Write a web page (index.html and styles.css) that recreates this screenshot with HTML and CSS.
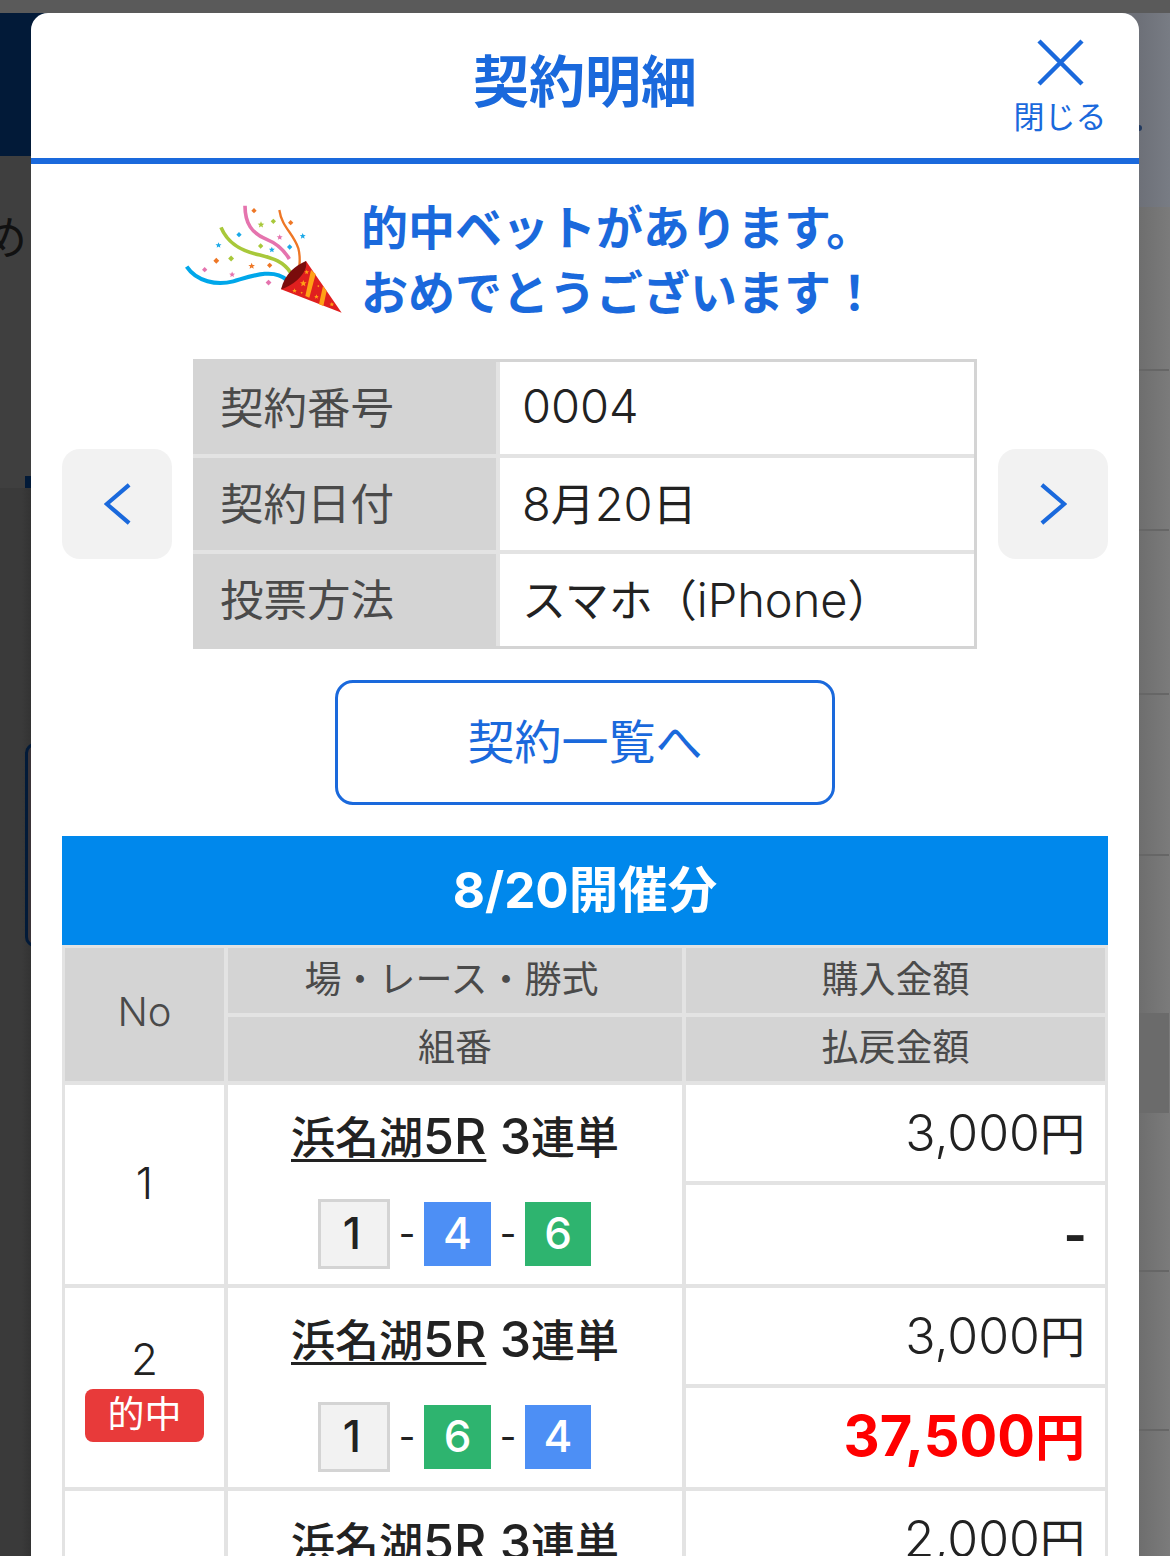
FILE: index.html
```html
<!DOCTYPE html>
<html lang="ja">
<head>
<meta charset="utf-8">
<title>契約明細</title>
<link rel="stylesheet" href="styles.css">
</head>
<body>
<div class="page">
  <div class="side side-left" aria-hidden="true">
    <div class="strip"></div>
    <div class="band-navy"></div>
    <div class="back-upper">
      <span class="back-glyph">め</span>
      <span class="back-tab"></span>
    </div>
    <div class="back-lower">
      <span class="back-box"></span>
    </div>
  </div>

  <div class="modal-wrap">
  <main class="modal">
    <header class="modal-head">
      <span></span>
      <h1 class="modal-title">契約明細</h1>
      <button class="close" type="button">
        <svg class="close-x" viewBox="0 0 47 47"><path d="M2 2L45 45M45 2L2 45"/></svg>
        <span class="close-label">閉じる</span>
      </button>
    </header>

    <div class="modal-body">
      <section class="congrats">
        <svg class="popper" viewBox="0 0 570 420">
          <defs>
            <polygon id="st" points="0,-10 2.8,-3.2 10,-3 4.4,1.6 6.2,8.6 0,4.8 -6.2,8.6 -4.4,1.6 -10,-3 -2.8,-3.2"/>
            <polygon id="di" points="0,-8 8,0 0,8 -8,0"/>
          </defs>
          <g fill="none" stroke-linecap="butt">
            <path stroke="#00a7ea" stroke-width="12" d="M50 230C80 275 140 287 190 274C240 260 310 232 350 270"/>
            <path stroke="#a8c83a" stroke-width="11" d="M153 112C175 165 220 185 270 195C310 205 340 215 362 248"/>
            <path stroke="#e574ae" stroke-width="11" d="M225 47C225 100 245 130 290 148C320 160 345 185 358 207"/>
            <path stroke="#ee7726" stroke-width="7" d="M328 60C335 110 370 130 385 175C390 195 390 210 388 228"/>
          </g>
          <polygon fill="#e01f1f" points="515,368 333,298 408,213"/>
          <path fill="#7a0c0c" d="M333 298C345 250 375 228 408 213C416 245 375 285 333 298Z"/>
          <polygon fill="#ffa116" points="423,240 437,252 418,323 406,318"/>
          <polygon fill="#ffa116" points="459,288 470,303 460,348 447,343"/>
          <g fill="#ffa116">
            <use href="#st" x="400" y="280"/>
            <use href="#st" x="368" y="297" transform="translate(116 94) scale(.7)"/>
            <use href="#st" x="410" y="246" transform="translate(123 74) scale(.7)"/>
            <use href="#di" x="395" y="308" transform="translate(237 185) scale(.4)"/>
            <use href="#st" x="439" y="320" transform="translate(132 96) scale(.7)"/>
            <use href="#di" x="445" y="288" transform="translate(267 173) scale(.4)"/>
            <use href="#st" x="485" y="343" transform="translate(146 103) scale(.7)"/>
          </g>
          <g fill="#ee7726">
            <use href="#di" x="252" y="62"/>
            <use href="#di" x="362" y="98"/>
            <use href="#di" x="139" y="212" transform="translate(-14 -21) scale(1.1)"/>
            <use href="#st" x="245" y="228"/>
            <use href="#di" x="299" y="226"/>
          </g>
          <g fill="#a8c83a">
            <use href="#st" x="273" y="104"/>
            <use href="#di" x="310" y="94"/>
            <use href="#di" x="272" y="168"/>
            <use href="#di" x="183" y="205" transform="translate(-18 -20) scale(1.1)"/>
          </g>
          <g fill="#e574ae">
            <use href="#st" x="329" y="142" transform="translate(33 14) scale(.9)"/>
            <use href="#di" x="104" y="239"/>
            <use href="#st" x="186" y="254" transform="translate(19 25) scale(.9)"/>
            <use href="#di" x="296" y="278" transform="translate(-30 -28) scale(1.1)"/>
          </g>
          <g fill="#1aa9e8">
            <use href="#di" x="207" y="134"/>
            <use href="#st" x="145" y="165" transform="translate(15 17) scale(.9)"/>
            <use href="#st" x="398" y="138" transform="translate(40 14) scale(.9)"/>
            <use href="#di" x="359" y="171"/>
            <use href="#st" x="305" y="179" transform="translate(31 18) scale(.9)"/>
          </g>
        </svg>
        <p class="congrats-text">的中ベットがあります。<br>おめでとうございます！</p>
      </section>

      <section class="info-row">
        <button class="nav-btn" type="button"><svg class="chev" viewBox="0 0 29 45"><path d="M27 2L3 22.5L27 43"/></svg></button>
        <div class="info">
          <div class="info-label">契約番号</div><div class="info-value">0004</div>
          <div class="info-label">契約日付</div><div class="info-value"><span>8<span class="cj">月</span>20<span class="cj">日</span></span></div>
          <div class="info-label">投票方法</div><div class="info-value"><span><span class="cj">スマホ（</span>iPhone<span class="cj">）</span></span></div>
        </div>
        <button class="nav-btn" type="button"><svg class="chev" viewBox="0 0 29 45"><path d="M2 2L26 22.5L2 43"/></svg></button>
      </section>

      <a class="list-btn">契約一覧へ</a>

      <h2 class="day-head">8/20開催分</h2>

      <div class="bets">
        <div class="th th-no">No</div>
        <div class="th th-race">場・レース・勝式</div>
        <div class="th">購入金額</div>
        <div class="th">組番</div>
        <div class="th">払戻金額</div>

        <div class="td td-no"><span>1</span></div>
        <div class="td-race">
          <p class="race"><u><span class="cj">浜名湖</span>5R</u> 3<span class="cj">連単</span></p>
          <p class="combo"><span class="chip chip-w">1</span><span class="dash">-</span><span class="chip chip-b">4</span><span class="dash">-</span><span class="chip chip-g">6</span></p>
        </div>
        <div class="td td-amt"><span>3,000<span class="yen">円</span></span></div>
        <div class="td td-amt td-none">-</div>

        <div class="td td-no"><span>2</span><span class="hit">的中</span></div>
        <div class="td-race">
          <p class="race"><u><span class="cj">浜名湖</span>5R</u> 3<span class="cj">連単</span></p>
          <p class="combo"><span class="chip chip-w">1</span><span class="dash">-</span><span class="chip chip-g">6</span><span class="dash">-</span><span class="chip chip-b">4</span></p>
        </div>
        <div class="td td-amt"><span>3,000<span class="yen">円</span></span></div>
        <div class="td td-amt td-win"><span>37,500<span class="yen">円</span></span></div>

        <div class="td td-no"><span>3</span></div>
        <div class="td-race">
          <p class="race"><u><span class="cj">浜名湖</span>5R</u> 3<span class="cj">連単</span></p>
        </div>
        <div class="td td-amt"><span>2,000<span class="yen">円</span></span></div>
        <div class="td td-amt td-none">-</div>
      </div>
    </div>
  </main>
  </div>

  <div class="side side-right" aria-hidden="true">
    <div class="strip"></div>
    <div class="band-grey"><span class="back-dot"></span></div>
    <div class="back-row r1"></div>
    <div class="back-row r2"></div>
    <div class="back-row r1"></div>
    <div class="back-row r3"></div>
    <div class="back-row r4"></div>
    <div class="back-row r5"></div>
    <div class="back-row r6"></div>
    <div class="back-row r6"></div>
  </div>
</div>
</body>
</html>
```

FILE: styles.css
```css
* { box-sizing: border-box; }
html, body { margin: 0; padding: 0; }
body {
  width: 1170px;
  height: 1556px;
  overflow: hidden;
  font-family: Inter, "Noto Sans CJK JP", sans-serif;
  font-weight: 300;
  color: #222;
  background: #3a3a3a;
}
p, h1, h2 { margin: 0; }

.page { display: flex; height: 1556px; overflow: hidden; }

/* dimmed page behind the dialog */
.side { width: 31px; flex: none; height: 1556px; overflow: hidden; display: flex; flex-direction: column; }
.strip { height: 13px; background: #5a5a5a; flex: none; }
.band-navy { height: 143px; background: #021a38; flex: none; }
.back-upper { height: 332px; flex: none; background: #3f3f3f; display: flex; flex-direction: column; }
.back-glyph { margin: 47px 0 0 -19px; font-size: 46px; line-height: 62px; color: #111; font-family: "Noto Sans CJK JP", sans-serif; font-weight: 400; }
.back-tab { margin: auto 0 0 25px; height: 12px; background: #021a38; }
.back-lower { flex: 1; background: linear-gradient(to right, #3a3a3a 70%, #333); padding: 255px 0 0 25px; }
.back-box { display: block; width: 20px; height: 204px; border: 3px solid #021a38; border-radius: 12px; background: #3a3438; }

.side-right { background: linear-gradient(to right, #6e6e6e, #7b7b7b); }
.band-grey { height: 194px; flex: none; background: linear-gradient(to right, #6d7078, #787c84); padding-top: 112px; }
.back-dot { display: block; width: 3px; height: 6px; background: #21395f; border-radius: 0 3px 3px 0; }
.back-row { flex: none; border-bottom: 2px solid #666; margin-right: 1px; }
.r1 { height: 164px; }
.r2 { height: 160px; }
.r3 { height: 161px; }
.r4 { height: 157px; border-bottom: 0; }
.r5 { height: 100px; background: #6b6b6b; border-bottom: 0; }
.r6 { height: 159px; }

/* dialog */
.modal-wrap {
  width: 1108px;
  flex: none;
  padding-top: 13px;
  background:
    linear-gradient(#5a5a5a 13px, transparent 13px),
    linear-gradient(to right, #021a38 50%, #6d7078 50%);
}
.modal {
  height: 100%;
  background: #fff;
  border-radius: 17px 17px 0 0;
  overflow: hidden;
}
.modal-head {
  height: 151px;
  border-bottom: 6px solid #1a69dc;
  display: grid;
  grid-template-columns: 1fr auto 1fr;
  align-items: start;
}
.modal-title {
  margin-top: 30px;
  font-size: 56px;
  line-height: 78px;
  font-weight: 700;
  color: #1a69dc;
}
.close {
  justify-self: end;
  margin: 26px 33px 0 0;
  padding: 0;
  width: 92px;
  border: 0;
  background: none;
  font: inherit;
  font-weight: 400;
  color: #1a69dc;
  display: flex;
  flex-direction: column;
  align-items: center;
}
.close-x { width: 47px; height: 47px; display: block; }
.close-x path { fill: none; stroke: #1a69dc; stroke-width: 4.5; }
.close-label {
  display: block;
  margin-top: 11px;
  font-size: 31px;
  line-height: 40px;
  white-space: nowrap;
}

.modal-body { padding: 0 31px; }

.congrats { display: flex; align-items: flex-start; padding: 26px 0 0 108px; height: 195px; }
.popper { width: 190px; height: 140px; flex: none; }
.congrats-text {
  margin: 5px 0 0 1px;
  font-size: 47px;
  line-height: 65px;
  font-weight: 700;
  color: #1a69dc;
  white-space: nowrap;
}

.cj { font-size: 44px; font-weight: 400; }

.info-row { display: flex; align-items: center; justify-content: space-between; }
.nav-btn {
  width: 110px;
  height: 110px;
  padding: 0;
  border: 0;
  border-radius: 18px;
  background: #f2f2f2;
  display: flex;
  align-items: center;
  justify-content: center;
}
.chev { width: 27px; height: 42px; display: block; }
.chev path { fill: none; stroke: #1a69dc; stroke-width: 4.5; }

.info {
  width: 784px;
  display: grid;
  grid-template-columns: 303px 1fr;
  grid-auto-rows: 92px;
  gap: 4px;
  background: #e3e3e3;
  border: solid #d4d4d4;
  border-width: 3px 3px 3px 0;
}
.info-label {
  background: #d4d4d4;
  color: #4a4a4a;
  font-size: 43.5px;
  font-weight: 400;
  padding: 0 0 6px 27px;
  display: flex;
  align-items: center;
}
.info-value {
  background: #fff;
  font-size: 47px;
  padding: 0 0 5px 22px;
  display: flex;
  align-items: center;
  white-space: nowrap;
}

.list-btn {
  display: flex;
  align-items: center;
  justify-content: center;
  width: 500px;
  height: 125px;
  margin: 31px auto;
  padding-bottom: 8px;
  border: 3px solid #1a69dc;
  border-radius: 18px;
  font-size: 47px;
  font-weight: 400;
  color: #1a69dc;
}

.day-head {
  height: 109px;
  padding-bottom: 9px;
  background: #0088ec;
  color: #fff;
  font-size: 49.5px;
  font-weight: 700;
  display: flex;
  align-items: center;
  justify-content: center;
}

.bets {
  display: grid;
  grid-template-columns: 159px 454px 419px;
  grid-template-rows: 65px 64px 96px 99px 96px 99px 96px 99px;
  gap: 4px;
  padding: 3px;
  background: #e3e3e3;
}
.th {
  background: #d4d4d4;
  color: #4a4a4a;
  font-size: 37px;
  font-weight: 400;
  padding-bottom: 8px;
  display: flex;
  align-items: center;
  justify-content: center;
}
.th-race { padding-right: 7px; }
.th-no { grid-row: span 2; font-size: 40px; font-weight: 300; padding-bottom: 6px; }
.td { background: #fff; }
.td-no {
  grid-row: span 2;
  display: flex;
  flex-direction: column;
  align-items: center;
  justify-content: center;
  padding-bottom: 4px;
  font-size: 44px;
  line-height: 60px;
}
.hit {
  display: block;
  width: 119px;
  height: 53px;
  border-radius: 8px;
  background: #e83a3a;
  color: #fff;
  font-size: 37px;
  font-weight: 400;
  line-height: 51px;
  text-align: center;
}
.td-race {
  grid-row: span 2;
  background: #fff;
  text-align: center;
  padding-top: 19px;
}
.race {
  height: 64px;
  font-size: 50px;
  line-height: 64px;
  font-weight: 500;
  white-space: nowrap;
}
.race .cj { font-weight: 500; }
.race u { text-decoration-thickness: 3px; text-underline-offset: 5px; }
.combo {
  margin-top: 31px;
  padding-right: 1px;
  display: flex;
  align-items: center;
  justify-content: center;
  height: 70px;
  font-size: 44px;
  font-weight: 500;
}
.chip {
  width: 67px;
  height: 64px;
  padding-bottom: 3px;
  display: flex;
  align-items: center;
  justify-content: center;
  color: #fff;
}
.chip:last-child { width: 66px; }
.chip-w { width: 72px; height: 70px; padding: 0 4px 3px 0; border: 3px solid #d4d4d4; background: #f2f2f2; color: #222; }
.chip-b { background: #4d8ff5; }
.chip-g { background: #2eb46f; }
.dash { width: 34px; text-align: center; font-size: 36px; font-weight: 400; }
.td-amt {
  display: flex;
  align-items: center;
  justify-content: flex-end;
  padding: 0 20px 4px 0;
  font-size: 50px;
  white-space: nowrap;
}
.yen { font-size: 45px; font-weight: 400; }
.td-none { font-weight: 700; font-size: 50px; padding: 0 18px 0 0; }
.td-win { color: #f00; font-weight: 700; font-size: 56px; padding: 0 20px 8px 0; }
.td-win .yen { font-size: 50px; font-weight: 700; }
```
